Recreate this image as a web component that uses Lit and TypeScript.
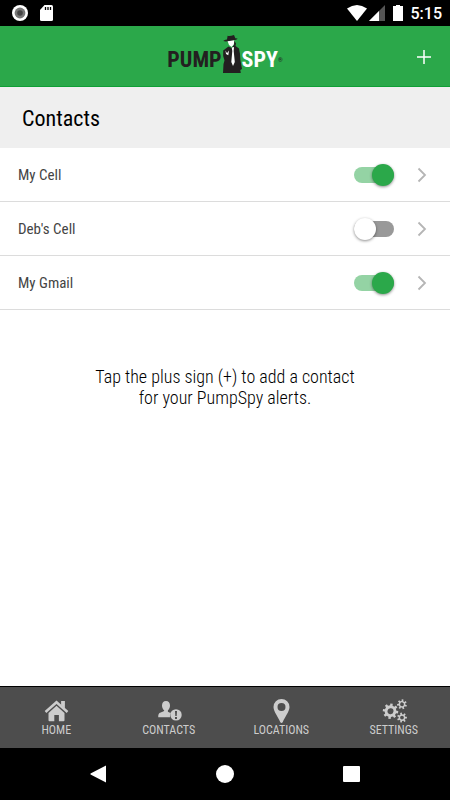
import { LitElement, html, css, svg } from "lit";
import { customElement, property, state } from "lit/decorators.js";

interface Contact {
  id: string;
  name: string;
  enabled: boolean;
}

const gear = (teeth: number, outer: number, inner: number, hole: number) => {
  const step = (Math.PI * 2) / teeth;
  const pt = (r: number, a: number) => `${(r * Math.cos(a)).toFixed(2)} ${(r * Math.sin(a)).toFixed(2)}`;
  let d = "";
  for (let i = 0; i < teeth; i++) {
    const a = i * step;
    d += `${i ? "L" : "M"}${pt(inner, a - step * 0.27)}L${pt(outer, a - step * 0.2)}L${pt(outer, a + step * 0.2)}L${pt(inner, a + step * 0.27)}`;
  }
  return `${d}ZM${hole} 0A${hole} ${hole} 0 1 0 ${-hole} 0A${hole} ${hole} 0 1 0 ${hole} 0Z`;
};

const homeIcon = svg`
  <path d="M1.500 13 12.500 3.200 23.500 13" fill="none" stroke="currentColor" stroke-width="2.500"/>
  <path d="M17.100 2h3.800v7.400l-3.800-3.400z"/>
  <path d="M12.500 6.800 20.500 13.900V21.200q0 1-1 1H14.900V16H10.300v6.200H5.500q-1 0-1-1V13.900Z"/>`;

const contactsIcon = svg`
  <path d="M9 2c2.600 0 4 1.900 4 4.400 0 1.900-.9 3.900-2.100 4.900v1.400c1 .6 2 .9 3 1.300-.9 1.300-1.200 2.800-.8 4.300H1.200c0-3.100.6-4.100 2.500-4.800 1.300-.5 2.600-.9 3.400-1.400v-.8C5.900 10.300 5 8.300 5 6.400 5 3.900 6.400 2 9 2Z"/>
  <path fill-rule="evenodd" d="M19 10.200a5.700 5.700 0 1 1 0 11.400a5.700 5.700 0 0 1 0-11.400ZM18 12l.3 4.900h1.400l.3-4.900ZM18 18v1.900h2v-1.900Z"/>`;

const pinIcon = svg`
  <path fill-rule="evenodd" d="M12.500 0a8 8 0 0 1 8 8c0 4.500-4.700 10-6.700 15q-.6 1-1.300 1t-1.300-1C9.200 18 4.500 12.500 4.500 8a8 8 0 0 1 8-8Zm0 4.100a4 4 0 1 0 0 8a4 4 0 0 0 0-8Z"/>`;

const settingsIcon = svg`
  <path fill-rule="evenodd" transform="translate(8.500 12.200) rotate(8)" d=${gear(8, 7.8, 5.9, 3)}/>
  <path fill-rule="evenodd" transform="translate(20 5.300) rotate(20)" d=${gear(7, 5, 3.4, 1.9)}/>
  <path fill-rule="evenodd" transform="translate(20 18.600)" d=${gear(7, 5, 3.4, 1.9)}/>`;

@customElement("status-bar")
export class StatusBar extends LitElement {
  static styles = css`
    :host {
      display: flex;
      align-items: center;
      justify-content: space-between;
      height: 26px;
      padding: 0 8px 0 12px;
      background: #000;
      color: #fff;
      font: 500 16px/26px Roboto, sans-serif;
    }
    .group {
      display: flex;
      align-items: center;
    }
    .left {
      gap: 12px;
    }
    .signal {
      margin-left: 2px;
    }
    .battery {
      margin: 0 8px;
    }
    .time {
      padding-top: 2px;
      line-height: 24px;
    }
    svg {
      display: block;
    }
  `;

  render() {
    return html`
      <div class="group left">
        <svg width="16" height="16" viewBox="0 0 16 16" aria-hidden="true">
          <circle cx="8" cy="8" r="8" fill="#fff" />
          <circle cx="8" cy="8" r="5.400" fill="#777" />
          <circle cx="8" cy="8" r="2.800" fill="#444" />
        </svg>
        <svg width="13" height="16" viewBox="0 0 13 16" aria-hidden="true">
          <path d="M4.500 0H11.500Q13 0 13 1.500V14.500Q13 16 11.500 16H1.500Q0 16 0 14.500V5Z" fill="#fff" />
          <path d="M5.500 2v3M8 2v3M10.500 2v3" stroke="#000" stroke-width="1.300" />
        </svg>
      </div>
      <div class="group">
        <svg width="20" height="16" viewBox="0 0 20 16" aria-hidden="true">
          <path d="M0 3.500Q10-3.500 20 3.500L10 16Z" fill="#fff" />
        </svg>
        <svg class="signal" width="16" height="16" viewBox="0 0 16 16" aria-hidden="true">
          <path d="M0 16 16 0V16Z" fill="#555" />
          <path d="M0 16 10 6V16Z" fill="#fff" />
        </svg>
        <svg class="battery" width="10" height="16" viewBox="0 0 10 16" aria-hidden="true">
          <path d="M3 0h4v1h3v15H0V1h3Z" fill="#fff" />
        </svg>
        <span class="time">5:15</span>
      </div>
    `;
  }
}

@customElement("brand-logo")
export class BrandLogo extends LitElement {
  static styles = css`
    :host {
      display: flex;
      align-items: flex-end;
      font: 700 22px/26px "Roboto Condensed", "Liberation Sans Narrow", Roboto, sans-serif;
    }
    .pump {
      color: #231f20;
    }
    .spy {
      color: #fff;
    }
    .mark {
      color: #231f20;
      font-size: 6px;
    }
    svg {
      display: block;
    }
  `;

  render() {
    return html`
      <span class="pump">PUMP</span>
      <svg width="20" height="38" viewBox="0 0 20 38" aria-hidden="true">
        <path d="M5 4.500 5.600.8Q8 1.400 12 0L13.300 3.200 15.500 3.600Q15.500 5 9 6Q2.500 6.800 1.500 6Q1.500 5 5 4.500Z" fill="#231f20" />
        <path d="M5.600 6.300 12.300 5.200Q12.500 8 11.500 10L9.500 12 7 10Z" fill="#fff" />
        <path d="M12.300 5.800 14 8.500 13.500 11 17 13.500Q18.200 18 18.400 25L20 34 18.300 35 18.800 38H1L1.500 29 2.500 25.500Q.5 21 1.200 15.500L6.500 11.500 9.500 13 12 10Z" fill="#231f20" />
        <path d="M9.700 12.500 12 12 11.700 16 12.800 27 11 31 9.300 27 10.300 16Z" fill="#fff" />
        <path d="M3.500 15.500 5 18.300 7 15.500 6.300 20.300 4 19Z" fill="#fff" />
      </svg>
      <span class="spy">SPY</span><span class="mark">®</span>
    `;
  }
}

@customElement("contact-row")
export class ContactRow extends LitElement {
  @property({ attribute: false }) contact!: Contact;

  static styles = css`
    :host {
      display: flex;
      align-items: center;
      height: 53px;
      padding: 0 16px 0 18px;
      border-bottom: 1px solid #dcdcdc;
      color: #444;
    }
    .name {
      flex: 1;
      font-size: 15px;
      line-height: 20px;
    }
    .toggle {
      appearance: none;
      position: relative;
      width: 40px;
      height: 16px;
      margin: 0 16px 0 0;
      border-radius: 8px;
      background: #999;
      cursor: pointer;
    }
    .toggle::before {
      content: "";
      position: absolute;
      top: -3px;
      left: 0;
      width: 22px;
      height: 22px;
      border-radius: 50%;
      background: #fff;
      box-shadow: 0 1px 3px rgba(0, 0, 0, 0.45);
    }
    .toggle:checked {
      background: #94d3a4;
    }
    .toggle:checked::before {
      left: 18px;
      background: #2ba84a;
    }
    .open {
      display: grid;
      place-items: center;
      width: 24px;
      height: 32px;
      padding: 0;
      border: 0;
      background: none;
      color: #b5b5b5;
    }
  `;

  render() {
    const { id, name, enabled } = this.contact;
    return html`
      <label class="name" for=${id}>${name}</label>
      <input class="toggle" id=${id} type="checkbox" .checked=${enabled} />
      <button class="open" type="button" aria-label="Open ${name}">
        <svg width="10" height="16" viewBox="0 0 10 16" aria-hidden="true">
          <path d="M1.500 1.500 8 8 1.500 14.500" fill="none" stroke="currentColor" stroke-width="1.800" />
        </svg>
      </button>
    `;
  }
}

@customElement("tab-bar")
export class TabBar extends LitElement {
  private tabs = [
    { label: "HOME", icon: homeIcon },
    { label: "CONTACTS", icon: contactsIcon },
    { label: "LOCATIONS", icon: pinIcon },
    { label: "SETTINGS", icon: settingsIcon },
  ];

  static styles = css`
    :host {
      display: grid;
      grid-template-columns: repeat(4, 1fr);
      height: 61px;
      border-top: 1px solid #000;
      background: #4d4d4d;
    }
    .tab {
      display: flex;
      flex-direction: column;
      align-items: center;
      padding-top: 12px;
      color: #ccc;
      font-size: 12px;
      line-height: 14px;
      text-decoration: none;
    }
    .icon {
      width: 24px;
      height: 24px;
      overflow: visible;
      fill: currentColor;
    }
  `;

  render() {
    return this.tabs.map(
      (tab) => html`
        <a class="tab" href="#${tab.label.toLowerCase()}">
          <svg class="icon" viewBox="0 0 24 24" aria-hidden="true">${tab.icon}</svg>
          <span>${tab.label}</span>
        </a>
      `
    );
  }
}

@customElement("system-nav")
export class SystemNav extends LitElement {
  static styles = css`
    :host {
      display: flex;
      align-items: center;
      justify-content: center;
      gap: 102px;
      height: 52px;
      background: #000;
    }
    .key {
      display: grid;
      place-items: center;
      width: 24px;
      height: 24px;
      padding: 0;
      border: 0;
      background: none;
      color: #fff;
    }
    svg {
      fill: currentColor;
    }
  `;

  render() {
    return html`
      <button class="key" type="button" aria-label="Back">
        <svg width="18" height="18" viewBox="0 0 18 18"><path d="M16 0.500V17.500L0.500 9.500V8.500Z" /></svg>
      </button>
      <button class="key" type="button" aria-label="Home">
        <svg width="18" height="18" viewBox="0 0 18 18"><circle cx="9" cy="9" r="9" /></svg>
      </button>
      <button class="key" type="button" aria-label="Overview">
        <svg width="18" height="18" viewBox="0 0 18 18"><rect x="1" y="1" width="17" height="16" rx="1" /></svg>
      </button>
    `;
  }
}

@customElement("app-root")
export class AppRoot extends LitElement {
  @state() private contacts: Contact[] = [
    { id: "cell", name: "My Cell", enabled: true },
    { id: "deb", name: "Deb's Cell", enabled: false },
    { id: "gmail", name: "My Gmail", enabled: true },
  ];

  static styles = css`
    :host {
      display: flex;
      flex-direction: column;
      min-height: 100vh;
      background: #fff;
      color: #000;
      font-family: "Roboto Condensed", Roboto, sans-serif;
    }
    .header {
      display: grid;
      grid-template-columns: 1fr auto 1fr;
      align-items: center;
      box-sizing: border-box;
      height: 61px;
      padding: 0 14px;
      border-bottom: 1px solid #0f9f35;
      background: #2ba84a;
    }
    .logo {
      grid-column: 2;
      margin-bottom: 4px;
    }
    .add {
      display: grid;
      place-items: center;
      justify-self: end;
      width: 24px;
      height: 24px;
      padding: 2px 0 0;
      border: 0;
      background: none;
      color: #fff;
    }
    .title {
      margin: 0;
      padding: 2px 22px 0;
      background: #efefef;
      font-size: 22px;
      font-weight: 400;
      line-height: 59px;
    }
    .main {
      flex: 1;
    }
    .hint {
      margin: 56px auto 0;
      text-align: center;
      font-size: 18px;
      font-weight: 300;
      line-height: 21px;
    }
  `;

  render() {
    return html`
      <status-bar></status-bar>
      <header class="header">
        <brand-logo class="logo"></brand-logo>
        <button class="add" type="button" aria-label="Add contact">
          <svg width="14" height="14" viewBox="0 0 14 14"><path d="M7 0V14M0 7H14" stroke="currentColor" stroke-width="1.500" /></svg>
        </button>
      </header>
      <main class="main">
        <h1 class="title">Contacts</h1>
        ${this.contacts.map((c) => html`<contact-row .contact=${c}></contact-row>`)}
        <p class="hint">Tap the plus sign (+) to add a contact<br />for your PumpSpy alerts.</p>
      </main>
      <tab-bar></tab-bar>
      <system-nav></system-nav>
    `;
  }
}
